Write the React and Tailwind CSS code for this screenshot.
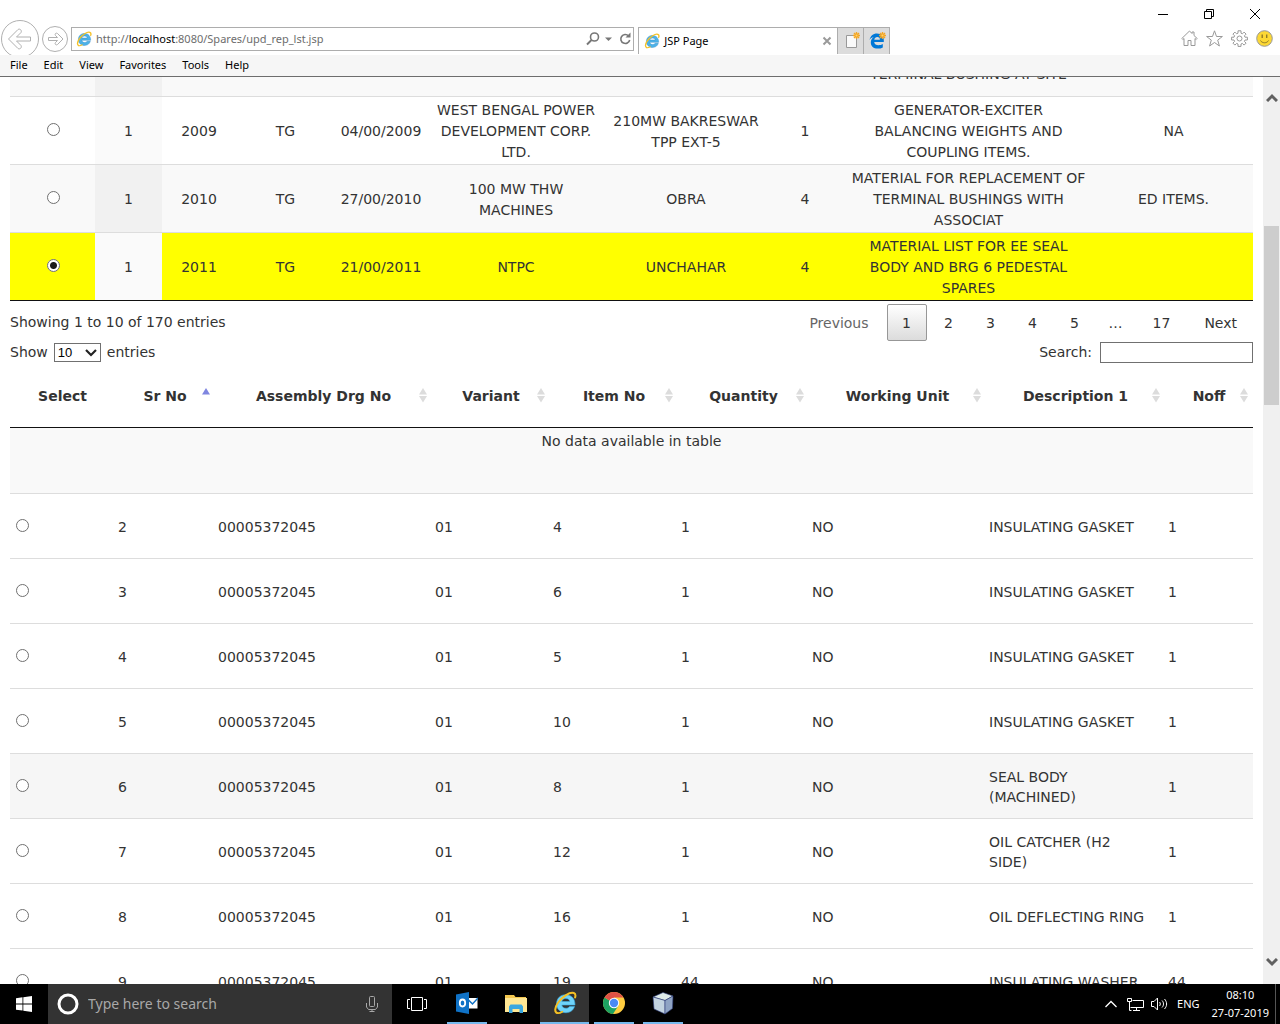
import { useState } from "react";

const reports = [
  {
    id: "r2008",
    values: ["", "", "", "", "", "", "", "\nTERMINAL BUSHING AT SITE", ""],
  },
  {
    id: "r2009",
    values: [
      "1",
      "2009",
      "TG",
      "04/00/2009",
      "WEST BENGAL POWER DEVELOPMENT CORP. LTD.",
      "210MW BAKRESWAR TPP EXT-5",
      "1",
      "GENERATOR-EXCITER\nBALANCING WEIGHTS AND\nCOUPLING ITEMS.",
      "NA",
    ],
  },
  {
    id: "r2010",
    values: [
      "1",
      "2010",
      "TG",
      "27/00/2010",
      "100 MW THW MACHINES",
      "OBRA",
      "4",
      "MATERIAL FOR REPLACEMENT OF TERMINAL BUSHINGS WITH ASSOCIAT",
      "ED ITEMS.",
    ],
  },
  {
    id: "r2011",
    values: [
      "1",
      "2011",
      "TG",
      "21/00/2011",
      "NTPC",
      "UNCHAHAR",
      "4",
      "MATERIAL LIST FOR EE SEAL\nBODY AND BRG 6 PEDESTAL\nSPARES",
      "",
    ],
  },
];

const items = [
  { sr: 2, item: "4", qty: "1", desc: "INSULATING GASKET", noff: "1" },
  { sr: 3, item: "6", qty: "1", desc: "INSULATING GASKET", noff: "1" },
  { sr: 4, item: "5", qty: "1", desc: "INSULATING GASKET", noff: "1" },
  { sr: 5, item: "10", qty: "1", desc: "INSULATING GASKET", noff: "1" },
  { sr: 6, item: "8", qty: "1", desc: "SEAL BODY\n(MACHINED)", noff: "1", hover: true },
  { sr: 7, item: "12", qty: "1", desc: "OIL CATCHER (H2\nSIDE)", noff: "1" },
  { sr: 8, item: "16", qty: "1", desc: "OIL DEFLECTING RING", noff: "1" },
  { sr: 9, item: "19", qty: "44", desc: "INSULATING WASHER", noff: "44" },
];

const itemColumns = ["Sr No", "Assembly Drg No", "Variant", "Item No", "Quantity", "Working Unit", "Description 1", "Noff"];

const radioClass =
  "block size-[13px] appearance-none rounded-full border border-[#707070] bg-white checked:bg-[radial-gradient(circle,#1a1a1a_3px,#ffffff_4px)]";

const itemCell = "px-[3px] pt-[2px] pb-0";

function IeLogo({ className, fill = "#4db2e8", stroke = "#2a86c4" }) {
  return (
    <svg viewBox="0 0 24 24" className={className} aria-hidden="true">
      <path
        d="M22 14H8.800c.3 2 1.900 3.300 4.200 3.300 1.600 0 2.800-.6 3.600-1.800h4.900c-1.200 3.900-4.400 6.200-8.700 6.200-5.400 0-9.200-3.600-9.200-9 0-5.200 3.800-9 9.100-9 5.900 0 9.400 4.200 9.300 10.300zM8.800 10.500h8c-.3-1.900-1.800-3-3.900-3-2.200 0-3.700 1.100-4.100 3z"
        fill={fill}
        stroke={stroke}
        strokeWidth="0.6"
      />
      <path
        d="M4.200 22c-2.800-.9-2.600-5.300.8-10.200C9.300 5.600 16.800.700 20.800 2c1.600.6 2 2.200 1.300 4.500"
        fill="none"
        stroke="#f5c024"
        strokeWidth="2"
        strokeLinecap="round"
      />
      <path d="M4.200 22c1.500.4 3.300-.2 5.200-1.300" fill="none" stroke="#f5c024" strokeWidth="1.600" strokeLinecap="round" />
    </svg>
  );
}

function Spark() {
  return (
    <g stroke="#f5a623" strokeWidth="1.400">
      <path d="M14.500 0v7M11 3.500h7M12 1l5 5M17 1l-5 5" />
      <circle cx="14.500" cy="3.500" r="1" fill="#ffd36b" stroke="none" />
    </g>
  );
}

function BrowserHeader() {
  return (
    <header className="shrink-0 bg-white text-black">
      <div className="flex h-[55px] items-stretch">
        <div className="flex shrink-0 items-end">
          <svg viewBox="0 0 71 35" className="h-[35px] w-[71px]" fill="none" stroke="#b0b0b0" role="img" aria-label="Back and forward">
            <circle cx="20" cy="19" r="18.500" />
            <path
              d="M8.500 19l9.500-9.500c1.800-1.200 4.200.8 3 3L16.500 17h14v4h-14l4.500 4.500c1.200 2.200-1.200 4.200-3 3z"
              strokeLinejoin="round"
            />
            <circle cx="55" cy="19" r="12.500" />
            <path d="M63 19l-5.500-5.500c-1.400-1.200-3.200.6-2 2l2 2h-9v3h9l-2 2c-1.200 1.400.6 3.200 2 2z" strokeLinejoin="round" />
          </svg>
        </div>
        <div className="mt-[27px] flex h-6 w-[44%] shrink-0 items-center border border-[#adadad] pl-1">
          <IeLogo className="size-4" />
          <span className="ml-1 flex-1 text-[11px] text-[#6d6d6d]">
            http://<span className="text-black">localhost</span>:8080/Spares/upd_rep_lst.jsp
          </span>
          <svg viewBox="0 0 48 16" className="h-4 w-12" fill="none" stroke="#777" strokeWidth="2" aria-hidden="true">
            <circle cx="9.500" cy="6" r="4" strokeWidth="1.600" />
            <path d="M6.500 9L2 13.500" />
            <path d="M20 6.500h7l-3.500 3.500z" fill="#777" stroke="none" />
            <path d="M43.500 4.800a4.500 4.500 0 1 0 1.200 4.200" strokeWidth="1.600" />
            <path d="M45.500 1.500v5h-5z" fill="#777" stroke="none" />
          </svg>
        </div>
        <div className="mt-[27px] ml-1 flex h-[27px] w-[200px] shrink-0 items-center border border-b-0 border-[#adadad] px-[5px] text-[11px]">
          <IeLogo className="size-4" />
          <span className="ml-1 flex-1">JSP Page</span>
          <button aria-label="Close tab">
            <svg viewBox="0 0 10 10" className="size-[10px]" stroke="#9a9a9a" strokeWidth="2">
              <path d="M1.500 1.500l7 7M8.500 1.500l-7 7" />
            </svg>
          </button>
        </div>
        <button aria-label="New tab" className="mt-[27px] flex h-[27px] w-[26px] shrink-0 items-center justify-center border-t border-r border-[#adadad] bg-[#dcdcdc]">
          <svg viewBox="0 0 18 18" className="size-[18px]">
            <path d="M4.500 3.500h10v12h-10z" fill="#fafafa" stroke="#999" />
            <Spark />
          </svg>
        </button>
        <button aria-label="Open Edge" className="mt-[27px] flex h-[27px] w-[26px] shrink-0 items-center justify-center border-t border-r border-[#adadad] bg-[#dcdcdc]">
          <svg viewBox="0 0 18 18" className="size-[18px]">
            <path
              d="M1.500 8C2.200 4.200 5 1.500 9 1.500c4.500 0 6.800 3 6.800 6.700v1.900H6.200c.2 2.200 2 3.200 4.300 3.200 1.700 0 3-.4 4.300-1.200v3.300c-1.400.8-3.100 1.200-5.100 1.200-4.200 0-6.900-2.300-6.900-6.100 0-2.300 1.200-4.300 3-5.400C3.900 5.500 2.500 6.500 1.500 8zm4.800-.3h5.600c0-1.700-.9-2.700-2.600-2.700-1.600 0-2.700 1-3 2.700z"
              fill="#0078d7"
            />
            <Spark />
          </svg>
        </button>
        <div className="flex flex-1 flex-col items-end">
          <div className="flex h-7 pr-[2px]">
            <button aria-label="Minimize" className="flex w-[46px] items-center justify-center">
              <svg viewBox="0 0 10 10" className="size-[10px]" stroke="#000">
                <path d="M0 5.500h10" />
              </svg>
            </button>
            <button aria-label="Restore" className="flex w-[46px] items-center justify-center">
              <svg viewBox="0 0 10 10" className="size-[10px]" stroke="#000" fill="none">
                <path d="M.5 2.500h7v7h-7zM2.500 2.500v-2h7v7h-2" />
              </svg>
            </button>
            <button aria-label="Close" className="flex w-[46px] items-center justify-center">
              <svg viewBox="0 0 10 10" className="size-[10px]" stroke="#000">
                <path d="M0 0l10 10M10 0L0 10" />
              </svg>
            </button>
          </div>
          <div className="flex gap-2 pt-[2px] pr-[7px]">
            <svg viewBox="0 0 17 17" className="size-[17px]" fill="none" stroke="#999">
              <path d="M.8 8.500L8.500 1l2.500 2.500V2h2v3.500l3.200 3-1 1-1.200-1v7h-4v-5H7v5H3v-7l-1.200 1z" strokeLinejoin="round" />
            </svg>
            <svg viewBox="0 0 17 17" className="size-[17px]" fill="none" stroke="#999">
              <path d="M8.500.8l2 5.700h5.900l-4.700 3.600 1.700 5.900-4.900-3.500L3.600 16l1.700-5.900L.6 6.500h5.900z" strokeLinejoin="round" />
            </svg>
            <svg viewBox="0 0 17 17" className="size-[17px]" fill="none" stroke="#999">
              <path
                d="M7 .8h3v2.400l1.400.6 1.700-1.700 2 2-1.700 1.700.6 1.400h2.400v2.800H14l-.6 1.400 1.700 1.700-2 2-1.700-1.700-1.400.6v2.400H7V14l-1.400-.6-1.700 1.700-2-2 1.700-1.700L3 10H.6V7.200H3l.6-1.400-1.700-1.700 2-2 1.700 1.700L7 3.200z"
                strokeLinejoin="round"
              />
              <circle cx="8.500" cy="8.500" r="2.500" />
            </svg>
            <svg viewBox="0 0 17 17" className="size-[17px]">
              <circle cx="8.500" cy="8.500" r="7.800" fill="#fcd835" stroke="#999" />
              <path d="M6.200 4.500v3.500M10.700 4.500v3.500" stroke="#8f7a28" strokeWidth="1.400" />
              <path d="M4.500 10.500c1.500 3 6.500 3 8 0" fill="none" stroke="#8f7a28" />
            </svg>
          </div>
        </div>
      </div>
      <nav className="flex h-[22px] items-center gap-4 border-b border-[#6d6d6d] bg-[#f6f6f6] px-[10px] text-[11px]">
        {["File", "Edit", "View", "Favorites", "Tools", "Help"].map((label) => (
          <button key={label}>{label}</button>
        ))}
      </nav>
    </header>
  );
}

function ReportTable() {
  const [selected, setSelected] = useState("r2011");

  return (
    <table className="w-full table-fixed border-collapse border-b border-[#111] text-center leading-[21px]">
      <colgroup>
        <col className="w-[85px]" />
        <col className="w-[67px]" />
        <col className="w-[74px]" />
        <col className="w-[99px]" />
        <col className="w-[92px]" />
        <col className="w-[178px]" />
        <col className="w-[162px]" />
        <col className="w-[76px]" />
        <col className="w-[251px]" />
        <col className="w-[159px]" />
      </colgroup>
      <tbody>
        {reports.map((row, index) => {
          const odd = index % 2 === 0;
          const active = selected === row.id;
          return (
            <tr key={row.id} className={`h-[68px] border-t border-[#ddd] ${active ? "bg-[#ffff00]" : odd ? "bg-[#f9f9f9]" : "bg-white"}`}>
              <td className="pt-0 pr-0 pb-[2px] pl-[2px]">
                <input
                  type="radio"
                  name="report"
                  aria-label={`Select report ${row.id}`}
                  className={`${radioClass} mx-auto`}
                  checked={active}
                  onChange={() => setSelected(row.id)}
                />
              </td>
              {row.values.map((value, i) => (
                <td
                  key={i}
                  className={`px-1 pt-[2px] pb-0 whitespace-pre-line ${i === 0 ? (odd ? "bg-[#f1f1f1]" : "bg-[#fafafa]") : ""}`}
                >
                  {value}
                </td>
              ))}
            </tr>
          );
        })}
      </tbody>
    </table>
  );
}

function Pagination() {
  return (
    <div className="flex h-[37px] items-stretch gap-[2px]">
      <button className="px-4 text-[#666]" disabled>
        Previous
      </button>
      <button className="w-10 rounded-[2px] border border-[#979797] bg-linear-to-b from-white to-[#dcdcdc]">1</button>
      {["2", "3", "4", "5"].map((page) => (
        <button key={page} className="w-10">
          {page}
        </button>
      ))}
      <span className="flex w-[38px] items-center justify-center">…</span>
      <button className="px-4">17</button>
      <button className="px-4">Next</button>
    </div>
  );
}

function SortIcon({ ascending }) {
  return (
    <svg viewBox="0 0 10 16" className="absolute top-5 right-1 h-4 w-[10px]" aria-hidden="true">
      {ascending ? (
        <path d="M1 7.500L5 1l4 6.500z" fill="#7f86e0" />
      ) : (
        <path d="M1 7.500L5 1l4 6.500zM1 9l4 6.500L9 9z" fill="#dcdcdc" />
      )}
    </svg>
  );
}

function ItemTable() {
  const [selected, setSelected] = useState(null);

  return (
    <table className="w-full table-fixed border-collapse text-left leading-5">
      <colgroup>
        <col className="w-[105px]" />
        <col className="w-[100px]" />
        <col className="w-[217px]" />
        <col className="w-[118px]" />
        <col className="w-[128px]" />
        <col className="w-[131px]" />
        <col className="w-[177px]" />
        <col className="w-[179px]" />
        <col className="w-[88px]" />
      </colgroup>
      <thead>
        <tr className="h-[60px] border-b border-[#111] align-top">
          <th className="pt-[19px] text-center">Select</th>
          {itemColumns.map((label, i) => (
            <th key={label} className="relative pt-[19px] text-center">
              {label}
              <SortIcon ascending={i === 0} />
            </th>
          ))}
        </tr>
      </thead>
      <tbody>
        <tr className="h-[66px] bg-[#f9f9f9] align-top">
          <td colSpan={9} className="pt-[3px] text-center">
            No data available in table
          </td>
        </tr>
        {items.map((row) => (
          <tr key={row.sr} className={`h-[65px] border-t border-[#ddd] ${row.hover ? "bg-[#f6f6f6]" : "bg-white"}`}>
            <td className="px-[6px] py-0">
              <input
                type="radio"
                name="item"
                aria-label={`Select item ${row.sr}`}
                className={radioClass}
                checked={selected === row.sr}
                onChange={() => setSelected(row.sr)}
              />
            </td>
            <td className={itemCell}>{row.sr}</td>
            <td className={itemCell}>00005372045</td>
            <td className={itemCell}>01</td>
            <td className={itemCell}>{row.item}</td>
            <td className={itemCell}>{row.qty}</td>
            <td className={itemCell}>NO</td>
            <td className={`${itemCell} whitespace-pre-line`}>{row.desc}</td>
            <td className={itemCell}>{row.noff}</td>
          </tr>
        ))}
      </tbody>
    </table>
  );
}

function Scrollbar() {
  return (
    <div className="flex w-[17px] shrink-0 flex-col items-center bg-[#f0f0f0]">
      <svg viewBox="0 0 12 9" className="mt-4 h-[9px] w-3 shrink-0" fill="none" stroke="#606060" strokeWidth="3">
        <path d="M1 8l5-5 5 5" />
      </svg>
      <div className="mt-[124px] h-[179px] w-[15px] bg-[#cdcdcd]" />
      <svg viewBox="0 0 12 9" className="mt-auto mb-[17px] h-[9px] w-3 shrink-0" fill="none" stroke="#606060" strokeWidth="3">
        <path d="M1 1l5 5 5-5" />
      </svg>
    </div>
  );
}

function TaskButton({ label, running, active, children }) {
  return (
    <button
      aria-label={label}
      className={`flex w-[49px] flex-col items-center justify-between ${active ? "bg-[#333]" : ""}`}
    >
      <span className="flex flex-1 items-center">{children}</span>
      {running && <span className={`h-[2px] bg-[#76b9ed] ${active ? "w-full" : "w-10"}`} />}
    </button>
  );
}

function Taskbar() {
  return (
    <footer className="flex h-10 shrink-0 items-stretch bg-black text-white">
      <button aria-label="Start" className="flex w-12 items-center justify-center">
        <svg viewBox="0 0 16 16" className="size-4" fill="#fff">
          <path d="M0 2.200l6.500-.9v6.200H0zM7.300 1.200L16 0v7.500H7.300zM0 8.400h6.500v6.200L0 13.700zM7.300 8.400H16V16l-8.700-1.200z" />
        </svg>
      </button>
      <label className="flex w-[344px] items-center bg-[#333] px-[9px]">
        <svg viewBox="0 0 22 22" className="size-[22px]" fill="none" stroke="#fff" strokeWidth="3">
          <circle cx="11" cy="11" r="9" />
        </svg>
        <input
          type="text"
          aria-label="Search Windows"
          placeholder="Type here to search"
          className="ml-[9px] min-w-0 flex-1 bg-transparent text-sm placeholder:text-[#a8a8a8]"
        />
        <svg viewBox="0 0 12 18" className="mr-[5px] h-[18px] w-3" fill="none" stroke="#a8a8a8">
          <rect x="3.500" y="1.500" width="5" height="10" rx="1" />
          <path d="M.5 8v4l2 2.500h7l2-2.500V8M6 14.500V17M3.500 16.500h5" />
        </svg>
      </label>
      <button aria-label="Task view" className="flex w-[50px] items-center justify-center">
        <svg viewBox="0 0 20 14" className="h-[14px] w-5" fill="none" stroke="#fff">
          <path d="M4.500.5h11v13h-11zM3 2.500H.5v9H3M17 2.500h2.500v9H17" />
        </svg>
      </button>
      <TaskButton label="Outlook" running>
        <svg viewBox="0 0 22 22" className="size-[22px]">
          <path d="M11 6h10.500v10.500H11z" fill="#fff" />
          <path d="M12 7.500l4.500 4.500L22 6" fill="none" stroke="#0f72c6" strokeWidth="1.500" />
          <path d="M0 2.500L13 0v22L0 19.500z" fill="#0f72c6" />
          <ellipse cx="6.500" cy="11" rx="2.700" ry="3.500" fill="none" stroke="#fff" strokeWidth="1.800" />
        </svg>
      </TaskButton>
      <TaskButton label="File Explorer">
        <svg viewBox="0 0 22 20" className="h-5 w-[22px]">
          <path d="M0 1h9l1.500 2H21v14H0z" fill="#f3c74f" />
          <path d="M0 4h22v14H0z" fill="#ffe794" />
          <path d="M4 19v-6.500l1.500-2h11l1.500 2V19h-3.500v-4h-7v4z" fill="#3aa7e0" />
        </svg>
      </TaskButton>
      <TaskButton label="Internet Explorer" running active>
        <IeLogo className="size-6" fill="#6fd3fa" stroke="#3aaee6" />
      </TaskButton>
      <TaskButton label="Chrome" running>
        <svg viewBox="0 0 22 22" className="size-[22px]">
          <circle cx="11" cy="11" r="11" fill="#ffcd40" />
          <path d="M11 11L1.500 5.500A11 11 0 0 0 10 22l5.500-8.500z" fill="#1da362" />
          <path d="M11 11L1.500 5.500a11 11 0 0 1 19 0H11z" fill="#de5246" />
          <circle cx="11" cy="11" r="5.200" fill="#fff" />
          <circle cx="11" cy="11" r="4.200" fill="#4a8af4" />
        </svg>
      </TaskButton>
      <TaskButton label="NetBeans" running>
        <svg viewBox="0 0 22 24" className="h-6 w-[22px]" stroke="#2c3a78" strokeWidth="0.600">
          <path d="M11 1.500l10 3.500-8 4.500L1 6z" fill="#dfebe8" />
          <path d="M1 6l12 3.500V23L2 18z" fill="#c3d3e0" />
          <path d="M21 5l-8 4.500V23l7.500-5.500z" fill="#8fa3c4" />
        </svg>
      </TaskButton>
      <div className="ml-auto flex items-center text-[11px]">
        <svg viewBox="0 0 12 8" className="h-2 w-3" fill="none" stroke="#fff" strokeWidth="1.300">
          <path d="M.5 7L6 1.500 11.500 7" />
        </svg>
        <svg viewBox="0 0 17 15" className="ml-[10px] h-[15px] w-[17px]" fill="none" stroke="#fff">
          <path d="M5.500 3.500h11v7H3.500M9.500 10.500v3M6 13.500h7M.5 1.500h4v3h-4zM2.500 4.500v9h2" />
        </svg>
        <svg viewBox="0 0 17 14" className="ml-[7px] h-[14px] w-[17px]" fill="none" stroke="#fff">
          <path d="M.5 4.500h2.500L6.500 1v12L3 9.500H.5zM8.500 5c1 1 1 3 0 4M11 3.500c2 2 2 5 0 7M13.500 2c2.800 3 2.800 7 0 10" />
        </svg>
        <span className="ml-[9px]">ENG</span>
        <div className="ml-3 text-center leading-[18px]">
          <div>08:10</div>
          <div>27-07-2019</div>
        </div>
        <div className="mr-1 ml-[6px] h-10 w-px bg-[#555]" />
      </div>
    </footer>
  );
}

export default function App() {
  return (
    <div className="flex h-screen flex-col overflow-hidden bg-white font-['Noto_Sans',sans-serif]">
      <BrowserHeader />
      <div className="flex min-h-0 flex-1">
        <main className="min-w-0 flex-1 overflow-hidden px-[10px] font-['DejaVu_Sans',sans-serif] text-sm text-[#333]">
          {/* page is scrolled part way into the first row */}
          <div className="-mt-[49px]">
            <ReportTable />
            <div className="flex items-start justify-between pt-[3px]">
              <div className="pt-2">Showing 1 to 10 of 170 entries</div>
              <Pagination />
            </div>
            <div className="flex h-[26px] items-center justify-between pb-1">
              <label className="flex items-center">
                Show
                <span className="relative mx-[6px] flex">
                  <select className="h-[19px] w-[47px] appearance-none border border-[#707070] bg-white pl-[3px] font-['Liberation_Sans',sans-serif] text-[13px] leading-[17px] text-black">
                    <option>10</option>
                    <option>25</option>
                    <option>50</option>
                    <option>100</option>
                  </select>
                  <svg viewBox="0 0 12 8" className="pointer-events-none absolute top-[6px] right-1 h-2 w-3" fill="none" stroke="#222" strokeWidth="2.200">
                    <path d="M1 1l5 5 5-5" />
                  </svg>
                </span>
                entries
              </label>
              <label className="flex items-center gap-2">
                Search:
                <input type="text" className="h-[21px] w-[153px] border border-[#707070] bg-white px-1" />
              </label>
            </div>
            <ItemTable />
          </div>
        </main>
        <Scrollbar />
      </div>
      <Taskbar />
    </div>
  );
}
